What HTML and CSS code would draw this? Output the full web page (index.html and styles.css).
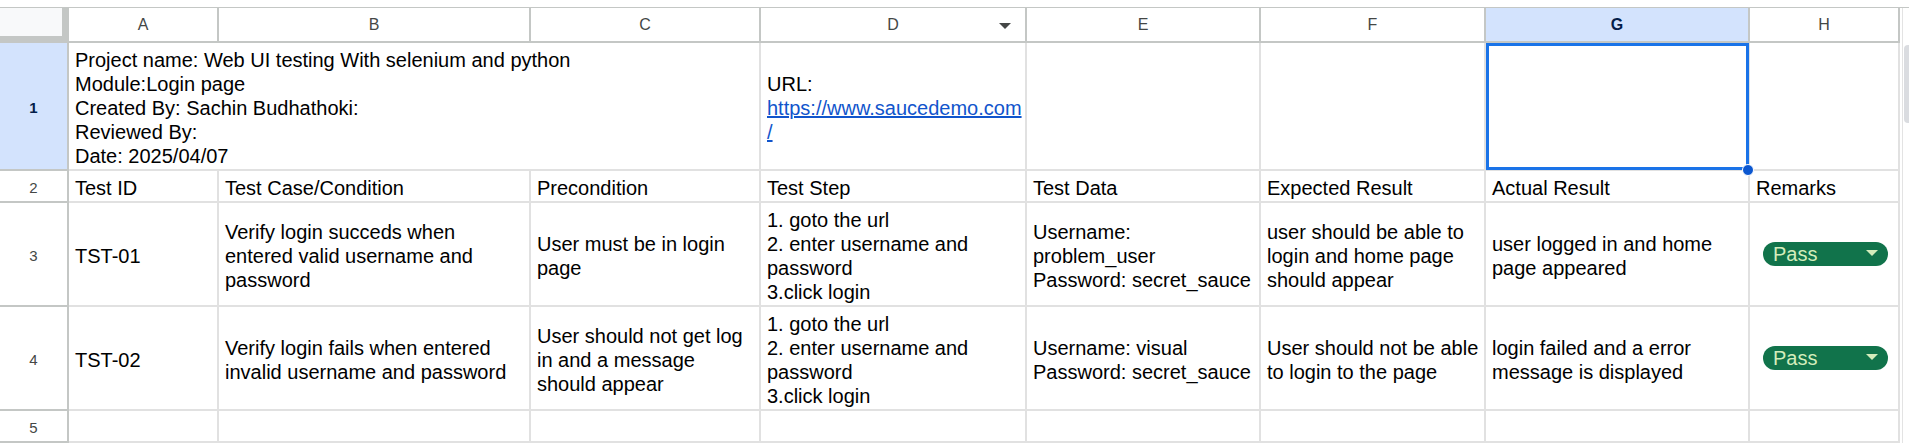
FILE: index.html
```html
<!DOCTYPE html>
<html>
<head>
<meta charset="utf-8">
<link rel="stylesheet" href="styles.css">
</head>
<body>
<div class="sheet">
  <div class="grid">
    <div class="corner"></div>
    <div class="ch">A</div>
    <div class="ch">B</div>
    <div class="ch">C</div>
    <div class="ch ch-filter">D<span class="tri"></span></div>
    <div class="ch">E</div>
    <div class="ch">F</div>
    <div class="ch ch-sel">G</div>
    <div class="ch">H</div>
    <div class="sb"><div class="thumb"></div></div>

    <div class="rh rh-sel">1</div>
    <div class="c span3"><div>Project name: Web UI testing With selenium and python<br>Module:Login page<br>Created By: Sachin Budhathoki:<br>Reviewed By:<br>Date: 2025/04/07</div></div>
    <div class="c"><div>URL:<br><a class="link" href="#">https://www.saucedemo.com<br>/</a></div></div>
    <div class="c"></div>
    <div class="c"></div>
    <div class="c active"><span class="handle"></span></div>
    <div class="c"></div>

    <div class="rh">2</div>
    <div class="c"><div>Test ID</div></div>
    <div class="c"><div>Test Case/Condition</div></div>
    <div class="c"><div>Precondition</div></div>
    <div class="c"><div>Test Step</div></div>
    <div class="c"><div>Test Data</div></div>
    <div class="c"><div>Expected Result</div></div>
    <div class="c"><div>Actual Result</div></div>
    <div class="c"><div>Remarks</div></div>

    <div class="rh">3</div>
    <div class="c"><div>TST-01</div></div>
    <div class="c"><div>Verify login succeds when<br>entered valid username and<br>password</div></div>
    <div class="c"><div>User must be in login<br>page</div></div>
    <div class="c"><div>1. goto the url<br>2. enter username and<br>password<br>3.click login</div></div>
    <div class="c"><div>Username:<br>problem_user<br>Password: secret_sauce</div></div>
    <div class="c"><div>user should be able to<br>login and home page<br>should appear</div></div>
    <div class="c"><div>user logged in and home<br>page appeared</div></div>
    <div class="c c-chip"><span class="chip"><span>Pass</span><span class="chip-tri"></span></span></div>

    <div class="rh">4</div>
    <div class="c"><div>TST-02</div></div>
    <div class="c"><div>Verify login fails when entered<br>invalid username and password</div></div>
    <div class="c"><div>User should not get log<br>in and a message<br>should appear</div></div>
    <div class="c"><div>1. goto the url<br>2. enter username and<br>password<br>3.click login</div></div>
    <div class="c"><div>Username: visual<br>Password: secret_sauce</div></div>
    <div class="c"><div>User should not be able<br>to login to the page</div></div>
    <div class="c"><div>login failed and a error<br>message is displayed</div></div>
    <div class="c c-chip"><span class="chip"><span>Pass</span><span class="chip-tri"></span></span></div>

    <div class="rh">5</div>
    <div class="c"></div>
    <div class="c"></div>
    <div class="c"></div>
    <div class="c"></div>
    <div class="c"></div>
    <div class="c"></div>
    <div class="c"></div>
    <div class="c"></div>
  </div>
</div>
</body>
</html>
```
FILE: styles.css
```css
* { box-sizing: border-box; }
html, body { margin: 0; padding: 0; background: #ffffff; }
body { width: 1909px; height: 444px; overflow: hidden; }

.sheet {
  padding-top: 7px;
  font-family: "Liberation Sans", Arial, sans-serif;
  color: #000000;
}

.grid {
  display: grid;
  grid-template-columns: 69px 150px 312px 230px 266px 234px 225px 264px 150px 9px;
  grid-template-rows: 35px 128px 32px 104px 104px 32px;
  border-top: 1px solid #c4c7c5;
}

.corner {
  background: #f8f9fa;
  border-right: 7px solid #c4c7c5;
  border-bottom: 7px solid #c4c7c5;
}

.ch {
  position: relative;
  display: flex;
  align-items: center;
  justify-content: center;
  font-size: 16px;
  color: #444746;
  background: #ffffff;
  border-right: 2px solid #c4c7c5;
  border-bottom: 2px solid #c4c7c5;
  padding-top: 1px;
}
.ch-sel {
  background: #d3e3fd;
  color: #041e49;
  font-weight: bold;
}
.tri {
  position: absolute;
  right: 14px;
  top: 15px;
  width: 0;
  height: 0;
  border-left: 6px solid transparent;
  border-right: 6px solid transparent;
  border-top: 6px solid #444746;
}

.sb {
  grid-column: 10;
  grid-row: 1 / 7;
  border-left: 1px solid #e3e3e3;
  margin-left: 2px;
  padding-top: 37px;
  padding-left: 1px;
}
.thumb {
  width: 8px;
  height: 78px;
  background: #dadce0;
  border-radius: 4px 0 0 4px;
}

.rh {
  display: flex;
  align-items: center;
  justify-content: center;
  font-size: 15px;
  color: #444746;
  background: #ffffff;
  border-right: 2px solid #c4c7c5;
  border-bottom: 2px solid #c4c7c5;
  padding-top: 2px;
}
.rh-sel {
  background: #d3e3fd;
  color: #041e49;
  font-weight: bold;
}

.c {
  position: relative;
  display: flex;
  align-items: center;
  padding: 4px 4px 0 6px;
  font-size: 20px;
  line-height: 24px;
  white-space: nowrap;
  border-right: 2px solid #e1e1e1;
  border-bottom: 2px solid #e1e1e1;
}
.span3 { grid-column: span 3; }

.link {
  color: #1155cc;
  text-decoration: underline;
}

.active::after {
  content: "";
  position: absolute;
  left: 0;
  top: 0;
  right: -1px;
  bottom: -1px;
  border: 3px solid #1a73e8;
  pointer-events: none;
}
.handle {
  position: absolute;
  right: -6px;
  bottom: -7px;
  width: 12px;
  height: 12px;
  border-radius: 50%;
  background: #0b57d0;
  border: 1px solid #ffffff;
  z-index: 2;
}

.c-chip { padding: 0 0 0 13px; }
.chip {
  display: flex;
  align-items: center;
  justify-content: space-between;
  width: 125px;
  height: 24px;
  padding: 0 10px 0 10px;
  border-radius: 12px;
  background: #11734b;
  color: #d4edbc;
  font-size: 20px;
  line-height: 24px;
}
.chip-tri {
  width: 0;
  height: 0;
  border-left: 6px solid transparent;
  border-right: 6px solid transparent;
  border-top: 6px solid #d4edbc;
  margin-bottom: 2px;
}
```
